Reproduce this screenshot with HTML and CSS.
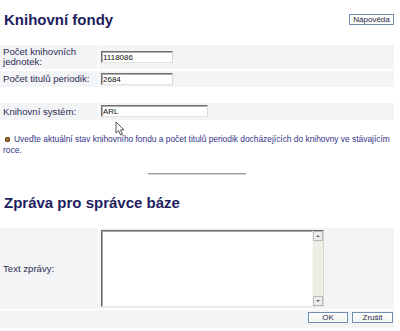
FILE: index.html
```html
<!DOCTYPE html>
<html lang="cs">
<head>
<meta charset="utf-8">
<title>Knihovní fondy</title>
<link rel="stylesheet" href="styles.css">
</head>
<body>
<div class="page">
  <div class="head">
    <h1 class="title">Knihovní fondy</h1>
    <button class="btn btn-help" type="button">Nápověda</button>
  </div>

  <div class="form form-top">
    <div class="lbl lbl-two">Počet knihovních jednotek:</div>
    <div class="val"><input class="inp inp-short" type="text" value="1118086"></div>
    <div class="lbl">Počet titulů periodik:</div>
    <div class="val"><input class="inp inp-short" type="text" value="2684"></div>
  </div>

  <div class="form form-sys">
    <div class="lbl">Knihovní systém:</div>
    <div class="val"><input class="inp inp-long" type="text" value="ARL"></div>
  </div>

  <p class="note"><span class="bullet"></span>Uveďte aktuální stav knihovního fondu a počet titulů periodik docházejících do knihovny ve stávajícím<br>roce.</p>

  <hr class="sep">

  <h2 class="title title-2">Zpráva pro správce báze</h2>

  <div class="form form-msg">
    <div class="lbl lbl-msg">Text zprávy:</div>
    <div class="val val-msg">
      <div class="area">
        <textarea class="area-text"></textarea>
        <div class="sbar">
          <div class="sbtn"><span class="arr arr-up"></span></div>
          <div class="strack"></div>
          <div class="sbtn"><span class="arr arr-down"></span></div>
        </div>
      </div>
    </div>
    <div class="actions">
      <button class="btn btn-act" type="button">OK</button>
      <button class="btn btn-act" type="button">Zrušit</button>
    </div>
  </div>

  <svg class="cursor" width="12" height="15" viewBox="0 0 12 15">
    <path d="M1 1 L1 12 L3.6 9.6 L5.6 14 L7.4 13.2 L5.5 8.9 L9 8.9 Z" fill="#fff" stroke="#555" stroke-width="1" stroke-linejoin="round"/>
  </svg>
</div>
</body>
</html>
```

FILE: styles.css
```css
html, body {
  margin: 0;
  padding: 0;
  background: #fff;
}

.page {
  position: relative;
  width: 394px;
  font-family: "Liberation Sans", Arial, sans-serif;
  color: #2e2e55;
}

.head {
  display: flex;
  justify-content: space-between;
  align-items: flex-start;
}

.title {
  margin: 11px 0 0 4px;
  font-size: 15px;
  line-height: 18px;
  font-weight: bold;
  color: #1e1e5e;
}

.btn {
  font-family: "Liberation Sans", Arial, sans-serif;
  font-size: 8px;
  line-height: 9px;
  color: #2a2a4a;
  background: linear-gradient(#ffffff, #f1f1ee);
  border: 1px solid #6f8fb0;
  box-shadow: inset 0 0 0 1px #fff;
  padding: 0;
  margin: 0;
  text-align: center;
}

.btn-help {
  margin-top: 14px;
  width: 45px;
  height: 11px;
}

.form {
  display: grid;
  grid-template-columns: 98px 1fr;
  column-gap: 1px;
  row-gap: 2px;
}

.form-top {
  margin-top: 16px;
}

.form-sys {
  margin-top: 16px;
}

.lbl, .val {
  background: #f3f4f6;
  display: flex;
  align-items: center;
}

.lbl {
  font-size: 9.6px;
  line-height: 10px;
  padding: 2px 3px;
  color: #2e2e55;
}

.lbl-two {
  padding-right: 20px;
}

.val {
  padding: 2px 0 2px 2px;
  min-height: 12px;
}

.form-sys .val {
  padding: 2px 0 3px 2px;
}

.inp {
  box-sizing: border-box;
  height: 12px;
  margin: 0;
  padding: 0 1px;
  font-family: "Liberation Sans", Arial, sans-serif;
  font-size: 8px;
  color: #111;
  background: #fff;
  border-style: solid;
  border-width: 1px;
  border-color: #707070 #d8d8d0 #e4e4dc #707070;
  box-shadow: inset 1px 1px 0 #b0b0b0;
  outline: none;
}

.inp-short {
  width: 72px;
}

.inp-long {
  width: 107px;
}

.note {
  margin: 14px 0 0 0;
  padding-left: 3px;
  font-size: 8.4px;
  line-height: 11px;
  color: #333388;
  white-space: nowrap;
}

.bullet {
  display: inline-block;
  width: 5px;
  height: 5px;
  border-radius: 50%;
  background: #b07a3a;
  box-shadow: inset 0 0 0 1px #5a3a1a;
  margin: 0 4px 0 2px;
  vertical-align: 0px;
}

.sep {
  width: 98px;
  margin: 17px auto 0 auto;
  height: 0;
  border: 0;
  border-top: 1px solid #9a9a9a;
  border-bottom: 1px solid #d6d6d6;
}

.title-2 {
  margin-top: 19px;
}

.form-msg {
  margin-top: 16px;
  row-gap: 1px;
}

.val-msg {
  padding: 2px 0 2px 2px;
}

.area {
  display: flex;
  box-sizing: border-box;
  width: 223px;
  height: 77px;
  border-style: solid;
  border-width: 1px;
  border-color: #6a6a6a #d8d8d0 #e4e4dc #6a6a6a;
  box-shadow: inset 1px 1px 0 #a8a8a8;
  background: #fff;
}

.area-text {
  flex: 1;
  border: 0;
  margin: 0;
  padding: 0;
  resize: none;
  background: transparent;
  outline: none;
}

.sbar {
  width: 10px;
  display: flex;
  flex-direction: column;
  background: #eeede6;
  border-left: 1px solid #f6f6f2;
}

.sbtn {
  box-sizing: border-box;
  height: 10px;
  background: #ececec;
  border: 1px solid #b9b9b9;
  display: flex;
  align-items: center;
  justify-content: center;
}

.strack {
  flex: 1;
}

.arr {
  width: 0;
  height: 0;
  border-left: 2px solid transparent;
  border-right: 2px solid transparent;
}

.arr-up {
  border-bottom: 2px solid #666;
}

.arr-down {
  border-top: 2px solid #666;
}

.actions {
  grid-column: 1 / 3;
  background: #f3f4f6;
  display: flex;
  justify-content: flex-end;
  gap: 4px;
  padding: 2px 1px 5px 0;
}

.btn-act {
  width: 40px;
  height: 11px;
}

.btn-act + .btn-act {
  width: 41px;
}

.cursor {
  position: absolute;
  left: 115px;
  top: 121px;
}
```
